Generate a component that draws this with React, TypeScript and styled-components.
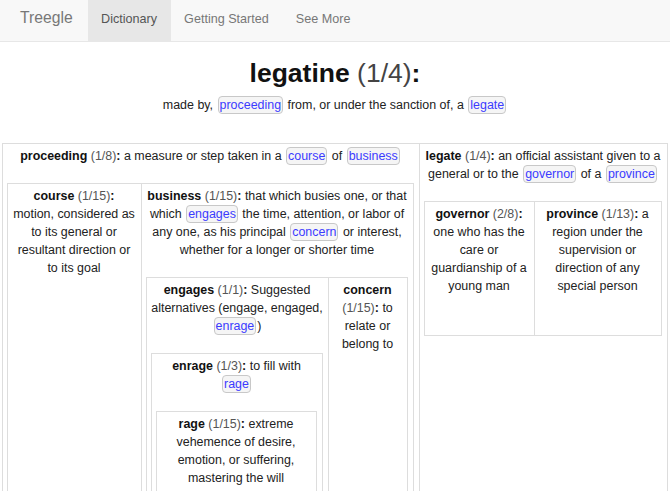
import React from 'react';
import styled, { createGlobalStyle } from 'styled-components';

const Global = createGlobalStyle`
  html, body { margin: 0; padding: 0; overflow: hidden; background: #fff; }
  * { box-sizing: border-box; }
  body {
    font-family: "Liberation Sans", Arial, sans-serif;
    font-size: 12.45px;
    line-height: 18px;
    color: #333;
  }
`;

const Navbar = styled.nav`
  display: flex;
  align-items: stretch;
  height: 42px;
  background: #f8f8f8;
  border-bottom: 1px solid #e7e7e7;
  padding-left: 6px;
  font-size: 12.6px;
  line-height: 18px;
`;

const Brand = styled.a`
  display: block;
  padding: 9px 15px 0 14px;
  font-size: 15.7px;
  color: #777;
  text-decoration: none;
`;

const NavLink = styled.a<{ $active?: boolean }>`
  display: block;
  padding: 10px 13.5px 0;
  color: ${(p) => (p.$active ? '#555' : '#777')};
  background: ${(p) => (p.$active ? '#e7e7e7' : 'transparent')};
  text-decoration: none;
`;

const Title = styled.h1`
  margin: 17px 0 0;
  font-size: 26.5px;
  line-height: 28px;
  font-weight: bold;
  text-align: center;
  color: #111;
`;

const Count = styled.span<{ $big?: boolean }>`
  font-weight: normal;
  color: ${(p) => (p.$big ? '#444' : '#555')};
`;

const Subtitle = styled.p`
  margin: 9px 0 0;
  text-align: center;
  color: #222;
`;

const Tree = styled.div`
  margin: 29px 2px 0;
  display: flex;
  align-items: stretch;
`;

const Row = styled.div`
  display: flex;
  align-items: stretch;
`;

const Node = styled.div<{ $w?: number; $first?: boolean }>`
  flex: ${(p) => (p.$w ? `0 0 ${p.$w}px` : '1 1 0')};
  min-width: 0;
  border: 1px solid #ddd;
  border-left: ${(p) => (p.$first ? '1px solid #ddd' : 'none')};
  padding: 3px 5px 4px 4px;
  text-align: center;
`;

const Def = styled.div`
  margin-bottom: 18px;
  color: #222;
`;

const Word = styled.b`
  color: #111;
`;

const Colon = styled.b`
  color: #111;
`;

const Spacer = styled.div`
  height: 18px;
`;

const Chip = styled.span`
  display: inline-block;
  line-height: 16px;
  margin: 0 1px;
  padding: 0 1px;
  border: 1px solid #c8c8c8;
  border-radius: 4px;
  background: #f5f5f5;
  color: #3b3bff;
`;

type Seg = string | { link: string };
type Entry = {
  word: string;
  count: string;
  def: Seg[];
  w?: number;
  children?: Entry[];
};

const tree: Entry[] = [
  {
    word: 'proceeding',
    count: '1/8',
    w: 418,
    def: ['a measure or step taken in a ', { link: 'course' }, ' of ', { link: 'business' }],
    children: [
      {
        word: 'course',
        count: '1/15',
        w: 135,
        def: ['motion, considered as to its general or resultant direction or to its goal'],
      },
      {
        word: 'business',
        count: '1/15',
        def: [
          'that which busies one, or that which ',
          { link: 'engages' },
          ' the time, attention, or labor of any one, as his principal ',
          { link: 'concern' },
          ' or interest, whether for a longer or shorter time',
        ],
        children: [
          {
            word: 'engages',
            count: '1/1',
            w: 183,
            def: ['Suggested alternatives (engage, engaged, ', { link: 'enrage' }, ')'],
            children: [
              {
                word: 'enrage',
                count: '1/3',
                def: ['to fill with ', { link: 'rage' }],
                children: [
                  {
                    word: 'rage',
                    count: '1/15',
                    def: ['extreme vehemence of desire, emotion, or suffering, mastering the will'],
                  },
                ],
              },
            ],
          },
          {
            word: 'concern',
            count: '1/15',
            def: ['to relate or belong to'],
          },
        ],
      },
    ],
  },
  {
    word: 'legate',
    count: '1/4',
    def: ['an official assistant given to a general or to the ', { link: 'governor' }, ' of a ', { link: 'province' }],
    children: [
      {
        word: 'governor',
        count: '2/8',
        w: 111,
        def: ['one who has the care or guardianship of a young man'],
      },
      {
        word: 'province',
        count: '1/13',
        def: ['a region under the supervision or direction of any special person'],
      },
    ],
  },
];

function Segs({ segs }: { segs: Seg[] }) {
  return (
    <>
      {segs.map((s, i) =>
        typeof s === 'string' ? <React.Fragment key={i}>{s}</React.Fragment> : <Chip key={i}>{s.link}</Chip>
      )}
    </>
  );
}

function EntryNode({ e, first }: { e: Entry; first: boolean }) {
  return (
    <Node $w={e.w} $first={first}>
      <Def>
        <Word>{e.word}</Word> <Count>({e.count})</Count>
        <Colon>:</Colon> <Segs segs={e.def} />
      </Def>
      {e.children && e.children.length ? (
        <Row>
          {e.children.map((c, i) => (
            <EntryNode key={c.word} e={c} first={i === 0} />
          ))}
        </Row>
      ) : (
        <Spacer />
      )}
    </Node>
  );
}

export default function App() {
  return (
    <>
      <Global />
      <Navbar>
        <Brand href="#">Treegle</Brand>
        <NavLink href="#" $active>
          Dictionary
        </NavLink>
        <NavLink href="#">Getting Started</NavLink>
        <NavLink href="#">See More</NavLink>
      </Navbar>
      <Title>
        legatine <Count $big>(1/4)</Count>:
      </Title>
      <Subtitle>
        made by, <Chip>proceeding</Chip> from, or under the sanction of, a <Chip>legate</Chip>
      </Subtitle>
      <Tree>
        {tree.map((e, i) => (
          <EntryNode key={e.word} e={e} first={i === 0} />
        ))}
      </Tree>
    </>
  );
}
